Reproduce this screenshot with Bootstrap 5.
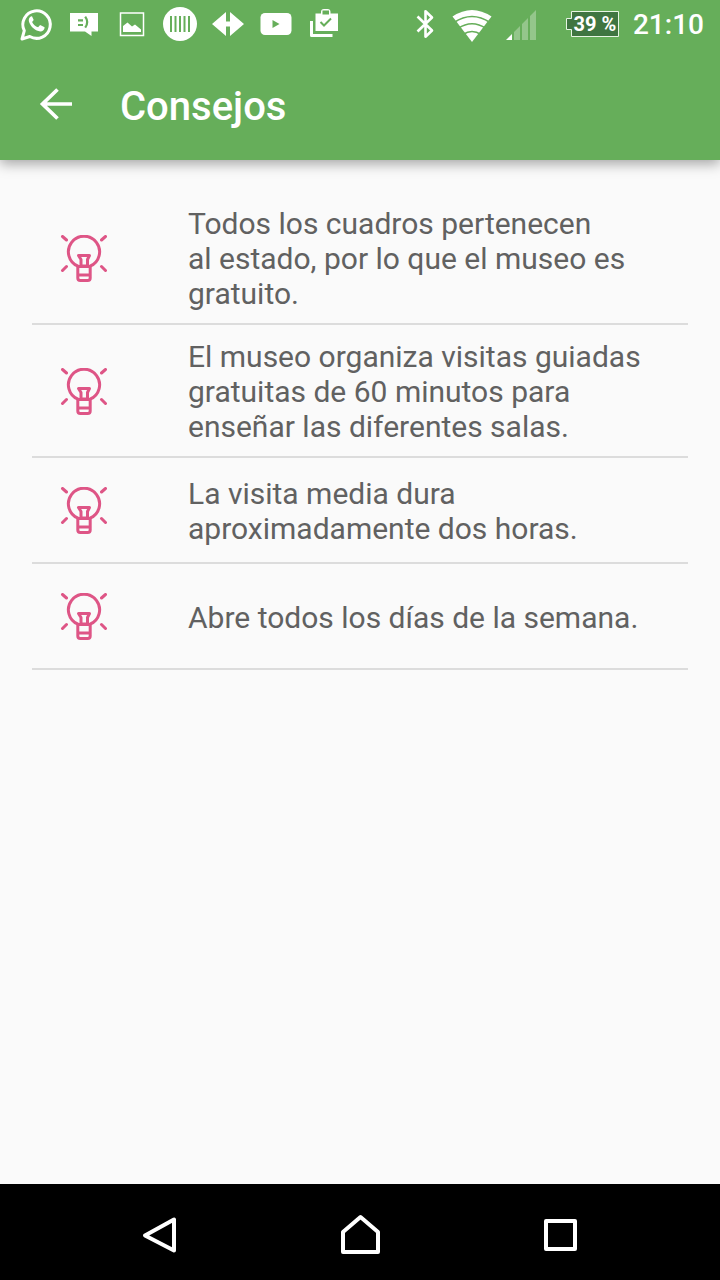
<!DOCTYPE html>
<html lang="es">
<head>
<meta charset="utf-8">
<meta name="viewport" content="width=device-width, initial-scale=1">
<title>Consejos</title>
<link href="https://cdn.jsdelivr.net/npm/bootstrap@5.3.0/dist/css/bootstrap.min.css" rel="stylesheet">
<style>
  body { font-family: Roboto, "Noto Sans", sans-serif; background: #fafafa; color: #616161; }
  svg { display: block; flex: none; }
  .app-top { background: #66ae5a; color: #fff; box-shadow: 0 4px 12px rgba(0, 0, 0, .34); }
  .status-bar { height: 48px; padding: 0 16px 0 12px; }
  .signal-icons { gap: 14px; }
  .battery { position: relative; width: 54px; height: 28px; margin: 0 13px 0 28px; }
  .battery-level { position: absolute; inset: 0 0 0 4px; font-size: 20px; line-height: 28px; font-weight: 700; text-align: center; white-space: nowrap; }
  .clock { font-size: 28px; line-height: 48px; font-weight: 500; padding-top: 2px; }
  .app-toolbar { height: 112px; padding: 0 32px; gap: 40px; }
  .app-title { font-size: 40px; line-height: 48px; font-weight: 500; padding-top: 6px; }
  .tip-list { padding: 32px; }
  .tip { min-height: 106px; padding: 14px 28px 12px 28px; gap: 80px; border-bottom: 2px solid #dcdcdc; font-size: 30px; line-height: 35px; }
  .bulb { color: #de5586; }
  .soft-keys { background: #000; height: 96px; padding: 8px 60px 0; }
  .soft-keys .btn:focus-visible, .app-toolbar .btn:focus-visible { outline: 2px solid #fff; }
</style>
</head>
<body>
<svg width="0" height="0" class="position-absolute" aria-hidden="true">
  <symbol id="bulb" viewBox="0 1 48 48">
    <g fill="none" stroke="currentColor" stroke-width="3" stroke-linecap="round" stroke-linejoin="round">
      <path d="M18 32.200A15.600 15.600 0 1 1 30 32.200"/>
      <path d="M18.500 21.500h11l-2 4v6.500h-6.500v-6.500z"/>
      <path d="M17.800 32.500v11.500q0 2.500 2.500 2.500h7.400q2.500 0 2.500-2.500v-11.500zM18 41h12"/>
      <path d="M2.500 2.500l4 3.500M45.500 2.500l-4 3.500M2.500 36.500l4-4M45.500 36.500l-4-4"/>
    </g>
  </symbol>
</svg>

<div class="d-flex flex-column min-vh-100">
  <header class="app-top">
    <div class="status-bar d-flex align-items-center justify-content-between">
      <div class="d-flex" aria-hidden="true">
        <svg width="48" height="48" viewBox="0 0 48 48"><path d="M10 39l2.300-8.300A13.700 13.700 0 1 1 17.800 36.500z" fill="none" stroke="#fff" stroke-width="3" stroke-linejoin="round"/><path d="M18.800 16.500q-2.700 2-1.800 5.300c1.500 5 6.500 9.200 11.300 9.600 2.500 0 4.300-1.500 4.300-4.200l-4.500-2.300-2 2.300c-2.800-1-4.800-2.900-6-5.300l1.600-2-1.700-3.700z" fill="#fff"/></svg>
        <svg width="48" height="48" viewBox="0 0 48 48"><path d="M10 13h28v18.500h-6.500V36L25 31.500H10z" fill="#fff"/><path d="M18 20.300h5M18 25h5M25.200 16.700q4 5.500 0 11" fill="none" stroke="#66ae5a" stroke-width="2.200"/></svg>
        <svg width="48" height="48" viewBox="0 0 48 48"><path d="M12.500 13h23v22.500h-23z" fill="none" stroke="#fff" stroke-width="1.500"/><path d="M15 32v-6l4.500-3.500 4.500 4 3-2 6 5V32z" fill="#fff"/></svg>
        <svg width="48" height="48" viewBox="0 0 48 48"><circle cx="24" cy="24" r="17" fill="#fff"/><path d="M15 16v16M19.500 16v16M24 16v16M28.500 16v16M33 16v16" stroke="#66ae5a" stroke-width="2"/></svg>
        <svg width="48" height="48" viewBox="0 0 48 48"><path d="M8 24L22 12v9.500h4V12L40 24 26 36v-9.500h-4V36z" fill="#fff"/></svg>
        <svg width="48" height="48" viewBox="0 0 48 48"><rect x="8.500" y="13" width="31" height="22" rx="4.500" fill="#fff"/><path d="M20.500 20v8l7-4z" fill="#66ae5a"/></svg>
        <svg width="48" height="48" viewBox="0 0 48 48"><path d="M11.500 21v14.500h21" fill="none" stroke="#fff" stroke-width="3" stroke-linejoin="round"/><path d="M15.500 13.500H21V12q0-3 3-3h3.500q3 0 3 3v1.500H38V31H15.500z" fill="#fff"/><path d="M23.500 11.500h4.500v2h-4.500zM20.500 22l3.500 3.500 7-7" fill="none" stroke="#66ae5a" stroke-width="2"/></svg>
      </div>
      <div class="d-flex align-items-center">
        <div class="signal-icons d-flex" aria-hidden="true">
          <svg width="24" height="48" viewBox="0 0 24 48"><path d="M3.500 16.500L18 30.500l-6.500 6.200V11.300L18 17.500 3.500 31.500" fill="none" stroke="#fff" stroke-width="2.600" stroke-linejoin="round"/></svg>
          <svg width="40" height="48" viewBox="0 0 40 48"><path d="M20 42L.500 16.500Q20 3.500 39.500 16.500z" fill="#fff"/><path d="M2 22.500q18-12 36 0M6 28.500q14-9.500 28 0M11 34.500q9-6 18 0" fill="none" stroke="#66ae5a" stroke-width="1.700"/></svg>
          <svg width="32" height="48" viewBox="0 0 32 48"><path d="M0 40l6-6v6z" fill="#fff"/><path d="M8 32l6-6v14H8zM16 24l6-6v22h-6zM24 16l6-6v30h-6z" fill="#fff" opacity=".3"/></svg>
        </div>
        <div class="battery">
          <svg width="54" height="28" viewBox="0 0 54 28" aria-hidden="true"><path d="M5.500 1.500h47v25h-47v-7h-5v-11h5z" fill="#3f7541" stroke="#e7f5e4"/></svg>
          <span class="battery-level">39 %</span>
        </div>
        <time class="clock" datetime="21:10">21:10</time>
      </div>
    </div>
    <div class="app-toolbar d-flex align-items-center">
      <button type="button" class="btn border-0 p-0" aria-label="Atrás">
        <svg width="48" height="48" viewBox="0 0 48 48" fill="none" stroke="#fff" stroke-width="3.700"><path d="M40 24H10M25.500 9.500L10.500 24l15 14.500"/></svg>
      </button>
      <h1 class="app-title m-0">Consejos</h1>
    </div>
  </header>

  <main class="flex-grow-1">
    <ul class="tip-list list-unstyled m-0">
      <li class="tip d-flex align-items-center"><svg class="bulb" width="48" height="48" aria-hidden="true"><use href="#bulb"/></svg><span>Todos los cuadros pertenecen<br>al estado, por lo que el museo es gratuito.</span></li>
      <li class="tip d-flex align-items-center"><svg class="bulb" width="48" height="48" aria-hidden="true"><use href="#bulb"/></svg><span>El museo organiza visitas guiadas gratuitas de 60 minutos para enseñar las diferentes salas.</span></li>
      <li class="tip d-flex align-items-center"><svg class="bulb" width="48" height="48" aria-hidden="true"><use href="#bulb"/></svg><span>La visita media dura aproximadamente dos horas.</span></li>
      <li class="tip d-flex align-items-center"><svg class="bulb" width="48" height="48" aria-hidden="true"><use href="#bulb"/></svg><span>Abre todos los días de la semana.</span></li>
    </ul>
  </main>

  <nav class="soft-keys d-flex" aria-label="Sistema">
    <button type="button" class="btn border-0 p-0 flex-fill d-flex align-items-center justify-content-center" aria-label="Volver">
      <svg width="48" height="48" viewBox="0 0 48 48" fill="none" stroke="#fff" stroke-width="4" stroke-linejoin="round"><path d="M38 7.500v31L9 23.500z"/></svg>
    </button>
    <button type="button" class="btn border-0 p-0 flex-fill d-flex align-items-center justify-content-center" aria-label="Inicio">
      <svg width="48" height="48" viewBox="0 0 48 48" fill="none" stroke="#fff" stroke-width="4" stroke-linejoin="round"><path d="M7 40V20L24.500 5 42 20v20z"/></svg>
    </button>
    <button type="button" class="btn border-0 p-0 flex-fill d-flex align-items-center justify-content-center" aria-label="Recientes">
      <svg width="48" height="48" viewBox="0 0 48 48" fill="none" stroke="#fff" stroke-width="4" stroke-linejoin="round"><path d="M10 9h29v28H10z"/></svg>
    </button>
  </nav>
</div>
<script src="https://cdn.jsdelivr.net/npm/bootstrap@5.3.0/dist/js/bootstrap.bundle.min.js"></script>
</body>
</html>
